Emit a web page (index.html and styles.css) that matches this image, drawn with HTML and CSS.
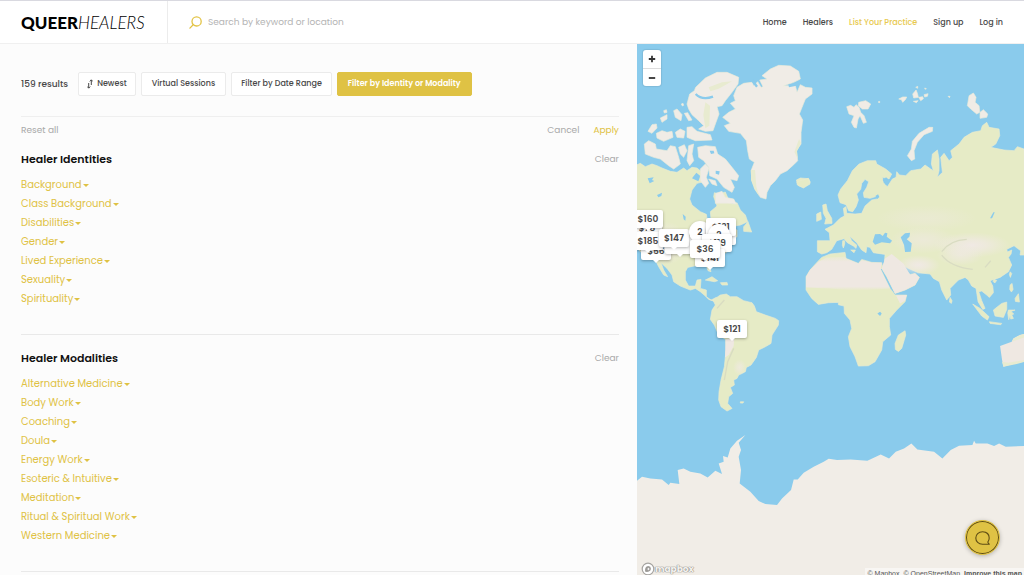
FILE: index.html
```
<!doctype html>
<html lang="en">
  <head>
    <meta charset="utf-8">
    <title>Queer Healers</title>
    <meta name="viewport" content="width=device-width, initial-scale=1">
    <link rel="stylesheet" href="styles.css">
  </head>
  <body>
    <header class="topbar">
      <a href="#" class="logo"><b>QUEER</b><i>HEALERS</i></a>
      <form class="search">
        <label for="search-input" aria-label="Search">
          <svg class="search-icon" viewBox="0 0 13 13" fill="none" stroke="currentColor" stroke-width="1.3" stroke-linecap="round">
            <circle cx="7.6" cy="5.4" r="4.6" />
            <path d="M4.2 8.8L.9 12.1" />
          </svg>
        </label>
        <input id="search-input" type="text" placeholder="Search by keyword or location">
      </form>
      <nav class="nav">
        <a href="#">Home</a>
        <a href="#">Healers</a>
        <a href="#" class="highlight">List Your Practice</a>
        <a href="#">Sign up</a>
        <a href="#">Log in</a>
      </nav>
    </header>

    <main class="content">
      <div class="results">
        <div class="filters">
          <span class="count">159 results</span>
          <button class="filter sort">
            <svg class="sort-icon" viewBox="0 0 6 10" fill="none" stroke="currentColor" stroke-width="1">
              <path d="M4.3 6V1M2.8 2.4L4.3.8l1.4 1.6M1.7 4v5M.3 7.6l1.4 1.6 1.5-1.6" />
            </svg>
            Newest
          </button>
          <button class="filter virtual">Virtual Sessions</button>
          <button class="filter dates">Filter by Date Range</button>
          <button class="filter identity active">Filter by Identity or Modality</button>
        </div>

        <div class="actions">
          <button>Reset all</button>
          <button class="cancel">Cancel</button>
          <button class="apply">Apply</button>
        </div>

        <section class="group">
          <div class="group-header">
            <h2>Healer Identities</h2>
            <button>Clear</button>
          </div>
          <ul>
            <li><button>Background</button></li>
            <li><button>Class Background</button></li>
            <li><button>Disabilities</button></li>
            <li><button>Gender</button></li>
            <li><button>Lived Experience</button></li>
            <li><button>Sexuality</button></li>
            <li><button>Spirituality</button></li>
          </ul>
        </section>

        <section class="group">
          <div class="group-header">
            <h2>Healer Modalities</h2>
            <button>Clear</button>
          </div>
          <ul>
            <li><button>Alternative Medicine</button></li>
            <li><button>Body Work</button></li>
            <li><button>Coaching</button></li>
            <li><button>Doula</button></li>
            <li><button>Energy Work</button></li>
            <li><button>Esoteric &amp; Intuitive</button></li>
            <li><button>Meditation</button></li>
            <li><button>Ritual &amp; Spiritual Work</button></li>
            <li><button>Western Medicine</button></li>
          </ul>
        </section>
      </div>

      <div class="map">
        <svg class="world" viewBox="0 0 1161 1593" preserveAspectRatio="xMinYMin slice">
          <defs>
            <radialGradient id="dry">
              <stop offset="0" stop-color="#f0e9e4" />
              <stop offset="0.4" stop-color="#f0e9e4" stop-opacity="0.7" />
              <stop offset="1" stop-color="#f0e9e4" stop-opacity="0" />
            </radialGradient>
            <linearGradient id="sahara" x2="0" y2="1">
              <stop offset="0" stop-color="#e9ebcf" />
              <stop offset="0.15" stop-color="#efe8e2" />
              <stop offset="0.88" stop-color="#efe8e2" />
              <stop offset="1" stop-color="#e6ebc5" />
            </linearGradient>
          </defs>

          <!-- north america -->
          <g transform="translate(0 408)">
            <path class="land" d="M0-46L10-50 25-40 45-48 60-43 75-36 100-26 120-23 140-36 150-28 165-38 180-36 195-23 190-8 205 4 180 10 165 30 158 57 165 75 190 95 208 103 212 128 222 118 220 95 240 78 230 50 232 38 245 42 265 36 275 60 285 72 300 68 310 90 325 105 332 125 310 135 280 140 300 150 300 170 280 180 288 190 270 215 240 235 215 250 222 275 213 272 208 258 180 256 152 262 145 275 145 300 155 318 175 318 180 300 192 298 190 325 208 330 208 350 222 360 238 352 232 364 215 358 205 348 190 335 175 325 160 330 130 318 110 305 105 285 90 265 72 248 80 270 92 290 80 285 65 260 55 240 30 225 10 215 0 200z" />
            <path class="land" d="M320 140L333 125 340 145 344 156 320 154zM205 300L225 290 242 302 232 305zM250 308L270 307 272 315 255 315z" />
            <ellipse cx="90" cy="190" rx="60" ry="65" fill="url(#dry)" />
            <path class="water" d="M32-5L50-8 45 0 52 3 38 10zM60 45L75 38 73 48 64 52zM137 102L146 110 145 122 140 118zM165-5L178-22 190-12 184 4z" />
          </g>

          <!-- canadian arctic and greenland -->
          <path class="arctic" d="M176 130L205 102 240 85 270 85 305 100 303 120 285 145 265 170 255 185 240 188 246 210 235 240 228 260 205 262 185 255 200 245 185 230 165 212 155 195 150 180 158 150 172 140z" />
          <path class="arctic" d="M150 250L165 248 180 262 220 272 225 288 175 290 150 280zM110 200L120 195 135 212 132 230 115 220zM142 208L152 206 165 228 155 230zM115 265L130 255 144 262 140 282 120 280zM58 268L75 260 90 265 105 262 108 280 80 292 60 282zM33 262L45 242 58 240 60 252 45 268zM70 222L90 212 90 225 75 235zM80 200l8-3 2 8-8 2zM133 180l5-2 2 6-4 2z" />
          <path class="arctic" d="M22 300L35 290 55 300 58 315 90 320 100 305 115 308 125 340 130 360 110 375 95 365 70 345 50 340 25 330zM125 310L142 302 150 320 140 340 130 330zM155 305L170 300 165 330 170 350 158 365 150 350zM182 310L205 305 235 308 242 330 265 345 285 370 305 395 300 410 280 405 292 430 285 445 260 430 240 405 218 395 215 370 200 350 185 340zM190 375L205 360 216 372 208 400 215 418 205 430 190 410zM215 405l20 5 5 15-15-5zM236 448L255 442 265 460 290 465 298 480 270 478 235 478z" />
          <path class="arctic" d="M375 95L400 75 425 64 460 66 485 82 490 105 470 115 440 125 475 125 480 145 490 122 505 130 525 132 525 150 505 165 495 190 487 210 497 228 492 265 492 300 478 320 482 350 470 362 450 380 430 390 415 410 400 425 390 445 387 465 370 460 358 440 345 410 342 380 352 355 337 345 332 320 328 290 310 268 275 262 262 245 280 238 257 220 275 205 295 195 280 178 295 170 290 155 300 130 320 118 345 115 350 125 362 113 372 130 378 128 368 108 390 105z" />
          <path class="land" d="M478 408L490 402 515 404 520 415 500 430 485 425z" />
          <path class="coast" d="M342 378l12 0 4 50 8 28-14-20-10-28zM486 285l6 12-12 25 2 22-10-20zM215 130l40-15 30-3-40 22-25 8zM205 175l14 10-2 60-12 8-6-40z" />
          <path class="inlet" d="M176 150Q195 170 228 158M345 108L360 128M455 126L485 120" />
          <path class="water" d="M218 320l12 0 2 8-10 2zM236 380l12 2-2 10-10-3z" />

          <!-- svalbard, franz josef, novaya and severnaya zemlya -->
          <g transform="translate(561 0)">
            <path class="arctic" d="M68 188L80 184 90 190 96 182 105 190 110 205 120 215 127 235 118 238 108 215 102 225 97 252 90 250 82 235 90 215 75 210zM104 175L125 170 140 180 132 195 115 195 103 185zM224 165l12-6 12 0-4 8-8 8-4-8zM266 150l10-12 4 10 3 12-14 2zM284 160l12-2 2 6-8 6zM300 152l12-3-2 8-8 2zM268 172l14-2-5 6zM275 130l6-3 0 6zM302 132l5 2-4 2zM162 174l5-2 0 4zM372 157l6 0-2 4z" />
            <path class="arctic" d="M435 155L448 147 456 160 453 175 465 185 467 205 458 210 440 195 430 185zM468 205L478 197 491 210 488 220 468 223zM315 250L326 250 325 262 300 272 280 295 270 320 272 345 262 350 250 335 262 315 265 292 285 268z" />
          </g>

          <!-- europe, asia and africa -->
          <g transform="translate(459 408)">
            <path class="land" d="M144 45L152 27 172 2 187-28 207-48 232-58 257-58 260-48 287-33 305-18 297-3 277-8 280 8 292 20 307-3 318-8 320-25 328-15 347-13 362-28 392-33 405-45 422-33 430-28 424-48 427-78 442-90 447-63 447-28 442-8 457-23 452-68 462-80 477-58 487-68 482-88 507-108 522-128 547-143 572-148 577-163 590-173 597-158 627-153 629-133 617-108 602-98 642-90 672-88 682-100 702-93V225L690 225 692 212 682 205 672 197 650 208 652 216 665 210 663 222 655 232 665 255 655 275 630 292 612 298 600 302 608 318 610 338 598 352 590 345 575 333 566 335 575 362 585 385 578 388 564 365 558 325 545 318 535 300 525 292 505 300 480 325 482 345 470 360 455 330 448 305 430 295 420 282 385 278 355 265 342 258 345 270 360 283 375 280 388 292 375 315 345 330 315 340 305 320 290 290 275 265 283 248 285 223 250 218 240 202 230 200 228 218 215 210 200 188 178 168 185 182 200 195 198 205 190 198 172 188 162 176 140 182 125 208 110 218 95 222 82 215 82 182 120 182 118 158 105 148 130 135 150 115 163 108 160 85 168 80 170 100 195 102 215 100 225 78 245 60 265 56 262 48 240 55 222 52 220 38 230 22 236 5 225-2 215 10 212 28 200 42 205 60 198 80 188 95 176 92 168 74 150 68z" />
            <path class="land" d="M98 75L108 72 112 92 125 115 126 130 104 132 108 115 100 100zM80 102L92 96 94 118 80 124zM20 5L55-5 60 12 40 24 22 15z" />
            <path class="land" d="M95 232L120 222 165 217 168 235 205 250 215 238 245 247 275 248 278 262 272 268 285 295 300 325 315 345 350 345 345 365 320 390 298 415 298 440 302 465 278 485 275 510 255 545 235 557 205 558 195 530 180 500 175 470 185 445 180 420 163 400 162 378 145 374 145 367 115 368 85 373 65 355 48 330 48 290 60 270 78 250z" />
            <path fill="url(#sahara)" d="M85 245L110 232 165 230 168 235 205 250 215 240 245 247 275 248 272 268 285 295 300 325 200 332 120 325 48 322 48 290 60 270z" />
            <path class="sand" d="M285 235L305 222 340 250 360 283 375 280 388 292 375 315 345 330 315 340 290 290 275 265zM318 346L350 345 345 362 330 370z" />
            <ellipse cx="385" cy="255" rx="65" ry="30" fill="url(#dry)" />
            <ellipse cx="545" cy="195" rx="115" ry="38" fill="url(#dry)" />
            <ellipse cx="510" cy="225" rx="70" ry="32" fill="url(#dry)" opacity="0.7" />
            <ellipse cx="400" cy="180" rx="100" ry="40" fill="url(#dry)" opacity="0.6" />
            <ellipse cx="410" cy="115" rx="150" ry="40" fill="url(#dry)" opacity="0.4" />
            <path class="ridge" d="M455 225Q480 260 548 268M455 215Q480 180 530 178M585 262L602 242" />
            <path class="water" d="M248 185L255 163 270 162 278 168 285 158 292 160 290 170 306 182 300 190 275 187 255 194zM332 172L345 160 360 158 358 170 350 178 365 190 362 215 345 216 342 195zM262 400l8-5 5 5-5 8zM600 115l10-18 4 0-8 18zM256 48l8-5 4 8-6 5zM278 0l10-8 12 10-12 14z" />
            <path class="land" d="M315 490L325 465 345 452 347 465 335 505 325 514 316 508zM480 352l6 10-2 8-6-4zM548 372L570 385 597 410 592 420 575 408zM598 425L635 430 632 434 600 430zM610 390L635 370 650 366 650 388 640 412 615 408zM655 390l20 0-12 4 8 8-6 3 5 10-8 2-2-12-4 14-3-20zM660 315l6-5 3 18-5 8-5-8zM675 355l10-14 3 25-12-2zM612 298l8 3-6 8-5-5zM660 275l5 5-4 12-3-8zM158 182l6 0 0 10-4 12-3-8zM182 210l14 0-4 8z" />
            <path class="sand" d="M630 498L665 485 670 475 690 465 702 462V545L680 548 640 560 636 540z" />
            <path class="coast" d="M665 485L670 475 690 465 702 462V472L685 478zM640 560L636 545 655 548 702 540V546L680 552z" />
          </g>

          <!-- south america -->
          <g transform="translate(0 678)">
            <path class="land" d="M235 85L250 75 268 72 280 80 300 80 320 92 345 98 352 108 358 125 385 135 415 145 425 152 424 165 405 195 402 220 385 230 365 240 358 262 342 285 328 292 325 305 305 315 300 325 290 330 292 345 280 352 287 370 275 380 272 400 285 415 270 423 252 410 245 390 246 365 252 330 262 290 267 240 266 208 245 195 232 165 220 148 225 120 235 105 228 90zM310 395l10 0-2 4-8 0z" />
            <path class="sand" d="M266 208L292 200 290 228 275 255 264 262z" />
            <ellipse cx="308" cy="292" rx="20" ry="24" fill="url(#dry)" opacity="0.7" />
            <path class="ridge" d="M262 90L240 115M290 235L272 275 262 330" />
          </g>

          <!-- antarctica -->
          <path class="ice" d="M0 1310L15 1298 40 1303 75 1306 95 1323 100 1316 127 1320 122 1278 140 1273 160 1283 190 1288 212 1300 235 1280 255 1290 245 1258 260 1253 258 1236 272 1240 280 1213 300 1190 325 1173 305 1196 312 1218 305 1238 312 1278 308 1318 340 1343 365 1371 385 1380 420 1383 435 1363 462 1338 470 1306 482 1306 500 1286 530 1268 560 1253 575 1244 600 1248 641 1246 691 1250 731 1231 756 1243 776 1223 801 1213 823 1198 841 1216 891 1223 916 1243 941 1218 966 1205 1006 1203 1011 1190 1016 1198 1051 1198 1071 1206 1086 1198 1106 1208 1161 1206V1593H0z" />
        </svg>

        <div class="pin pin-a">$78</div>
        <div class="pin pin-b">$160</div>
        <div class="pin pin-c">$56</div>
        <div class="pin pin-d">$185</div>
        <div class="pin pin-e"></div>
        <div class="pin pin-f">$147</div>
        <div class="pin cluster pin-g">2</div>
        <div class="pin pin-h"></div>
        <div class="pin pin-i">$131</div>
        <div class="pin cluster pin-j">2</div>
        <div class="pin pin-k">$119</div>
        <div class="pin pin-l">$141</div>
        <div class="pin pin-m">$36</div>
        <div class="pin pin-n">$121</div>

        <div class="zoom">
          <button aria-label="Zoom in">
            <svg viewBox="0 0 8 8" stroke="currentColor" stroke-width="1.8"><path d="M4 .8v6.4M.8 4h6.4" /></svg>
          </button>
          <button aria-label="Zoom out">
            <svg viewBox="0 0 8 8" stroke="currentColor" stroke-width="1.8"><path d="M.8 4h6.4" /></svg>
          </button>
        </div>

        <a href="#" class="mapbox">
          <svg viewBox="0 0 14 14">
            <circle cx="7" cy="7" r="5.8" fill="#fff" stroke="#a6a4a1" stroke-width="1.2" />
            <path d="M4.2 9.8C3.7 6.5 4.7 4.2 7.4 4.1a2.7 2.7 0 012.5 2.7C9.8 9.3 7.5 10.2 4.2 9.8z" fill="#9c9a97" />
            <path d="M7.4 5.4l.5 1 1 .5-1 .5-.5 1-.5-1-1-.5 1-.5z" fill="#fff" />
          </svg>
          <span>mapbox</span>
        </a>
        <div class="attribution">
          <a href="#">© Mapbox</a>
          <a href="#">© OpenStreetMap</a>
          <a href="#" class="improve">Improve this map</a>
        </div>
      </div>
    </main>

    <button class="chat" aria-label="Open chat">
      <svg viewBox="0 0 16 14" fill="none" stroke="currentColor" stroke-width="1.1" stroke-linejoin="round">
        <path d="M14.3 13.2H7.5C3.5 13.2.8 10.6.8 7S3.5.8 7.6.8s6.6 2.5 6.6 6.2c0 1.7-.5 3-1.4 4.1.3.9.8 1.6 1.5 2.1z" />
      </svg>
    </button>
  </body>
</html>
```
FILE: styles.css
```
* {
  margin: 0;
  padding: 0;
  box-sizing: border-box;
}

html, body {
  height: 100%;
  overflow: hidden;
}

body {
  display: flex;
  flex-direction: column;

  background-color: #fcfcfc;
  color: #484848;
  font-family: Poppins, Inter, "Liberation Sans", sans-serif;
  font-size: 9px;
}

a {
  color: inherit;
  text-decoration: none;
}

button, input {
  border: none;
  outline: none;
  background: none;
  color: inherit;
  font: inherit;
}

button {
  cursor: pointer;
}

.topbar {
  flex: none;
  height: 44px;
  border-top: 1px solid #d9d9e0;
  border-bottom: 1px solid #f0f0f0;
  background-color: #fff;

  display: flex;
  align-items: center;
}

.logo {
  align-self: stretch;
  width: 168px;
  padding-left: 21px;
  border-right: 1px solid #ececec;

  display: flex;
  align-items: center;

  color: #000;
  font-family: Lato, sans-serif;
  font-size: 17px;
}

.logo b {
  font-weight: 900;
}

.logo i {
  font-weight: 300;
}

.search {
  flex: 1;
  padding-left: 21px;

  display: flex;
  align-items: center;
  gap: 6px;
}

.search-icon {
  display: block;
  width: 13px;
  height: 13px;
  color: #e2c344;
}

.search input {
  flex: 1;
  min-width: 0;
  line-height: 16px;
}

.search input::placeholder {
  color: #b4b4b4;
}

.nav {
  display: flex;
  gap: 16px;
  margin-right: 21px;
  padding-top: 1px;
  font-size: 8px;
  font-weight: 500;
  white-space: nowrap;
}

.highlight {
  color: #e8c94e;
}

.content {
  flex: 1;
  min-height: 0;
  display: flex;
}

.results {
  width: 62.2%;
  padding: 28px 18px 0 21px;
  overflow: hidden;
}

.filters {
  display: flex;
  align-items: center;
  gap: 5px;
  padding-bottom: 20px;
  border-bottom: 1px solid #efefef;
  white-space: nowrap;
}

.count {
  margin-right: 5px;
  font-weight: 500;
}

.filter {
  height: 24px;
  padding: 0 9px;
  border: 1px solid #ebebeb;
  border-radius: 2px;
  background-color: #fff;
  font-size: 8px;
  font-weight: 500;

  display: flex;
  align-items: center;
  gap: 4px;
}

.filter.active {
  border-color: #dfc244;
  background-color: #dfc244;
  color: #fff;
  font-weight: 600;
}

.filter.virtual, .filter.identity {
  padding: 0 10px;
}

.filter.sort {
  padding: 0 8px;
}

.sort-icon {
  width: 6px;
  height: 10px;
}

.actions {
  display: flex;
  gap: 14px;
  padding-top: 7px;
  line-height: 12px;
  color: #a9a9a9;
}

.cancel {
  margin-left: auto;
}

.actions .apply {
  color: #dfc244;
}

.group {
  padding: 14px 0 26px;
  border-bottom: 1px solid #e9e9e9;
}

.group-header {
  display: flex;
  justify-content: space-between;
  align-items: center;
  line-height: 18px;
  margin-bottom: 7px;
}

.group-header h2 {
  color: #111;
  font-size: 11px;
  font-weight: 600;
}

.group-header button {
  color: #a9a9a9;
}

.group ul {
  list-style: none;
}

.group li {
  display: flex;
}

.group li button {
  color: #dfc244;
  font-size: 10px;
  line-height: 19px;

  display: flex;
  align-items: center;
}

.group li button::after {
  content: "";
  margin: 2px 0 0 1px;
  border: 3px solid transparent;
  border-top-color: currentColor;
  border-bottom: none;
}

.map {
  position: relative;
  flex: 1;
  overflow: hidden;
  background-color: #8acbec;
}

.world {
  display: block;
  width: 100%;
  height: 100%;
}

.land {
  fill: #e6ebc6;
  stroke: #e9ebd0;
  stroke-width: 2;
  stroke-linejoin: round;
}

.arctic {
  fill: #f0ece6;
  stroke: #ecebda;
  stroke-width: 2;
  stroke-linejoin: round;
}

.sand {
  fill: #efe8e2;
}

.ice {
  fill: #f1ede7;
}

.coast {
  fill: #e8ebd0;
}

.water {
  fill: #8acbec;
}

.inlet {
  fill: none;
  stroke: #8acbec;
  stroke-width: 7;
}

.ridge {
  fill: none;
  stroke: #d9dcc2;
  stroke-width: 4;
}

.pin {
  position: absolute;
  width: 30px;
  height: 18px;
  border-radius: 2px;
  background-color: #fff;
  box-shadow: 0 1px 3px rgba(0, 0, 0, 0.3);

  font-size: 9px;
  font-weight: 600;
  line-height: 18px;
  text-align: center;
}

.pin::after {
  content: "";
  position: absolute;
  top: 100%;
  left: 50%;
  margin-left: -3px;
  border: 3px solid transparent;
  border-top-color: #fff;
  border-bottom: none;
}

.cluster {
  width: 22px;
  height: 22px;
  border-radius: 50%;
  line-height: 22px;
}

.cluster::after {
  display: none;
}

.pin-a { left: -5px; top: 175px; }
.pin-b { left: -4px; top: 166px; }
.pin-c { left: 4px; top: 198px; }
.pin-d { left: -4px; top: 188px; }
.pin-e { left: 28px; top: 192px; }
.pin-f { left: 22px; top: 185px; }
.pin-g { left: 52px; top: 177px; }
.pin-h { left: 69px; top: 183px; }
.pin-i { left: 69px; top: 174px; }
.pin-j { left: 71px; top: 180px; }
.pin-k { left: 65px; top: 190px; }
.pin-l { left: 58px; top: 205px; }
.pin-m { left: 53px; top: 196px; }
.pin-n { left: 80px; top: 276px; }

.zoom {
  position: absolute;
  top: 6px;
  left: 6px;
  width: 18px;
  border-radius: 3px;
  background-color: #fff;
  box-shadow: 0 0 1px 1px rgba(0, 0, 0, 0.08);
}

.zoom button {
  width: 18px;
  height: 18px;
  color: #333;

  display: flex;
  align-items: center;
  justify-content: center;
}

.zoom button + button {
  border-top: 1px solid #ddd;
}

.zoom svg {
  width: 8px;
  height: 8px;
}

.mapbox {
  position: absolute;
  left: 4px;
  bottom: -1px;

  display: flex;
  align-items: center;

  color: #f4f2ef;
  font-size: 9px;
  font-weight: 700;
  line-height: 14px;
  text-shadow: 0 0 1px #8f8d8a, 0 0 1px #8f8d8a, 0 0 1px #8f8d8a;
}

.mapbox svg {
  width: 14px;
  height: 14px;
}

.attribution {
  position: absolute;
  right: 0;
  bottom: -5px;
  padding: 0 2px;
  background-color: rgba(255, 255, 255, 0.5);
  color: #555;
  font-family: "Liberation Sans", sans-serif;
  font-size: 7px;
  line-height: 12px;
  white-space: nowrap;

  display: flex;
  gap: 4px;
}

.improve {
  font-weight: 700;
}

.chat {
  position: fixed;
  right: 24px;
  bottom: 20px;
  width: 35px;
  height: 35px;
  border: 1px solid #dfc244;
  border-radius: 50%;
  background-color: #dfc244;
  box-shadow: inset 0 0 0 1px #5f4d14, 0 1px 4px rgba(0, 0, 0, 0.25);
  color: #5f4d14;

  display: flex;
  align-items: center;
  justify-content: center;
}

.chat svg {
  width: 16px;
  height: 14px;
}
```
